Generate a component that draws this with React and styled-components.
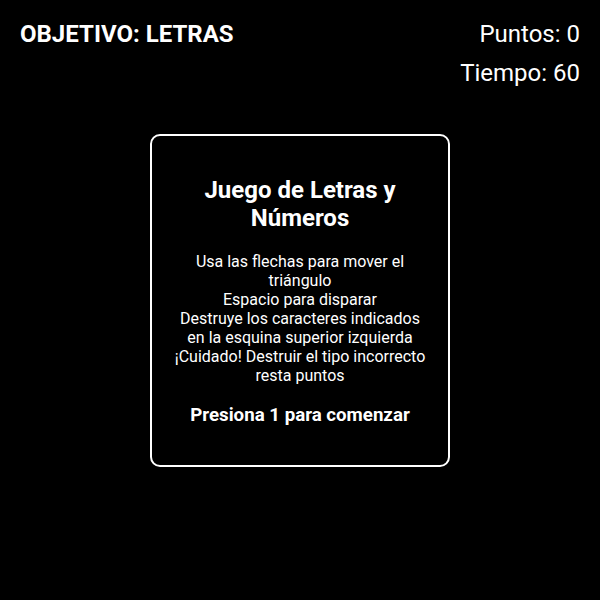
import styled, { createGlobalStyle } from "styled-components";

const GlobalStyle = createGlobalStyle`
    html, body {
        margin: 0;
        padding: 0;
        background: #000;
        color: #fff;
        font-family: Roboto, "Liberation Sans", sans-serif;
    }
`

const Screen = styled.div`
    display: grid;
    grid-template-areas: "stack";
    width: 100vw;
    height: 100vh;
    background: #000;
    overflow: hidden;
`

const Hud = styled.div`
    grid-area: stack;
    align-self: start;
    display: flex;
    justify-content: space-between;
    align-items: flex-start;
    padding: 20px;
    font-size: 24px;
`

const Objective = styled.div`
    font-weight: 700;
`

const Stats = styled.div`
    display: flex;
    flex-direction: column;
    align-items: flex-end;
    gap: 11px;
`

const Modal = styled.div`
    grid-area: stack;
    align-self: center;
    justify-self: center;
    width: 256px;
    padding: 20px;
    border: 2px solid #fff;
    border-radius: 10px;
    text-align: center;
    background: #000;
`

const Title = styled.h2`
    font-size: 24px;
    font-weight: 700;
    margin: 20px 0;
`

const Info = styled.p`
    font-size: 16px;
    margin: 16px 0;
`

const Start = styled.p`
    font-size: 18.7px;
    font-weight: 700;
    margin: 19px 0;
`

const App = () => {
    return (
        <>
            <GlobalStyle />
            <Screen>
                <Hud>
                    <Objective>OBJETIVO: LETRAS</Objective>
                    <Stats>
                        <div>Puntos: 0</div>
                        <div>Tiempo: 60</div>
                    </Stats>
                </Hud>
                <Modal>
                    <Title>Juego de Letras y Números</Title>
                    <Info>
                        Usa las flechas para mover el triángulo<br />
                        Espacio para disparar<br />
                        Destruye los caracteres indicados en la esquina superior izquierda<br />
                        ¡Cuidado! Destruir el tipo incorrecto resta puntos
                    </Info>
                    <Start>Presiona 1 para comenzar</Start>
                </Modal>
            </Screen>
        </>
    )
}

export default App;
